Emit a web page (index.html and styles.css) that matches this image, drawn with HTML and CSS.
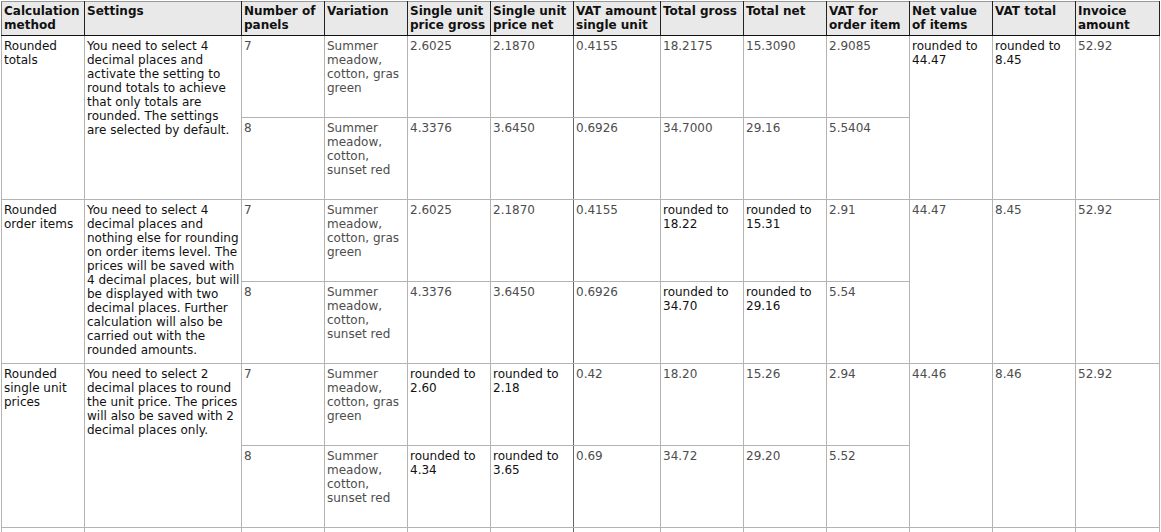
FILE: index.html
```html
<!DOCTYPE html>
<html lang="en">
<head>
<meta charset="utf-8">
<title>Rounding methods</title>
<link rel="stylesheet" href="styles.css">
</head>
<body>
<table class="grid">
  <colgroup>
    <col class="c83"><col class="c157"><col class="c83"><col class="c83"><col class="c83"><col class="c83"><col class="c87"><col class="c83"><col class="c83"><col class="c83"><col class="c83"><col class="c83"><col class="c84">
  </colgroup>
  <thead>
    <tr>
      <th>Calculation method</th>
      <th>Settings</th>
      <th>Number of panels</th>
      <th>Variation</th>
      <th>Single unit price gross</th>
      <th class="split">Single unit price net</th>
      <th>VAT amount single unit</th>
      <th>Total gross</th>
      <th>Total net</th>
      <th>VAT for order item</th>
      <th>Net value of items</th>
      <th>VAT total</th>
      <th>Invoice amount</th>
    </tr>
  </thead>
  <tbody>
    <tr class="row">
      <td rowspan="2" class="dark">Rounded totals</td>
      <td rowspan="2" class="dark">You need to select 4 decimal places and activate the setting to round totals to achieve that only totals are rounded. The settings are selected by default.</td>
      <td>7</td>
      <td>Summer meadow, cotton, gras green</td>
      <td>2.6025</td>
      <td class="split">2.1870</td>
      <td>0.4155</td>
      <td>18.2175</td>
      <td>15.3090</td>
      <td>2.9085</td>
      <td rowspan="2" class="dark">rounded to 44.47</td>
      <td rowspan="2" class="dark">rounded to 8.45</td>
      <td rowspan="2">52.92</td>
    </tr>
    <tr class="row">
      <td>8</td>
      <td>Summer meadow, cotton, sunset red</td>
      <td>4.3376</td>
      <td class="split">3.6450</td>
      <td>0.6926</td>
      <td>34.7000</td>
      <td>29.16</td>
      <td>5.5404</td>
    </tr>
    <tr class="row">
      <td rowspan="2" class="dark">Rounded order items</td>
      <td rowspan="2" class="dark">You need to select 4 decimal places and nothing else for rounding on order items level. The prices will be saved with 4 decimal places, but will be displayed with two decimal places. Further calculation will also be carried out with the rounded amounts.</td>
      <td>7</td>
      <td>Summer meadow, cotton, gras green</td>
      <td>2.6025</td>
      <td class="split">2.1870</td>
      <td>0.4155</td>
      <td class="dark">rounded to 18.22</td>
      <td class="dark">rounded to 15.31</td>
      <td>2.91</td>
      <td rowspan="2">44.47</td>
      <td rowspan="2">8.45</td>
      <td rowspan="2">52.92</td>
    </tr>
    <tr class="row">
      <td>8</td>
      <td>Summer meadow, cotton, sunset red</td>
      <td>4.3376</td>
      <td class="split">3.6450</td>
      <td>0.6926</td>
      <td class="dark">rounded to 34.70</td>
      <td class="dark">rounded to 29.16</td>
      <td>5.54</td>
    </tr>
    <tr class="row">
      <td rowspan="2" class="dark">Rounded single unit prices</td>
      <td rowspan="2" class="dark">You need to select 2 decimal places to round the unit price. The prices will also be saved with 2 decimal places only.</td>
      <td>7</td>
      <td>Summer meadow, cotton, gras green</td>
      <td class="dark">rounded to 2.60</td>
      <td class="dark split">rounded to 2.18</td>
      <td>0.42</td>
      <td>18.20</td>
      <td>15.26</td>
      <td>2.94</td>
      <td rowspan="2">44.46</td>
      <td rowspan="2">8.46</td>
      <td rowspan="2">52.92</td>
    </tr>
    <tr class="row">
      <td>8</td>
      <td>Summer meadow, cotton, sunset red</td>
      <td class="dark">rounded to 4.34</td>
      <td class="dark split">rounded to 3.65</td>
      <td>0.69</td>
      <td>34.72</td>
      <td>29.20</td>
      <td>5.52</td>
    </tr>
    <tr class="row">
      <td></td><td></td><td></td><td></td><td></td><td class="split"></td><td></td><td></td><td></td><td></td><td></td><td></td><td></td>
    </tr>
  </tbody>
</table>
</body>
</html>
```

FILE: styles.css
```css
html, body {
  margin: 0;
  padding: 0;
  background: #ffffff;
}

body {
  padding: 1px 0 0 1px;
  overflow: hidden;
  height: 532px;
  box-sizing: border-box;
  font-family: "DejaVu Sans", Verdana, sans-serif;
  font-size: 12px;
  line-height: 14px;
  color: #4d4d4d;
}

.grid {
  border-collapse: collapse;
  table-layout: fixed;
  width: 1159px;
  border-left: 1px solid #777777;
  border-right: 1px solid #777777;
  border-top: 1px solid #999999;
}

.c83 { width: 83px; }
.c84 { width: 84px; }
.c87 { width: 87px; }
.c157 { width: 157px; }

.grid th {
  background: #e9e9e9;
  color: #111111;
  font-weight: bold;
  text-align: left;
  vertical-align: top;
  padding: 2px 1px 3px 2px;
  border-right: 1px solid #222222;
  border-bottom: 1px solid #111111;
  border-top: 1px solid #999999;
}

.grid td {
  vertical-align: top;
  padding: 3px 1px 0 2px;
  border: 1px solid #b3b3b3;
  height: 78px;
  overflow: hidden;
}

.grid td.dark {
  color: #111111;
}

.grid td.split {
  border-right-color: #666666;
}
```
